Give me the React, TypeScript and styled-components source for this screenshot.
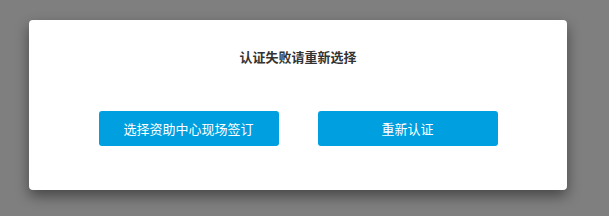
import React from "react";
import styled, { createGlobalStyle } from "styled-components";

const GlobalStyle = createGlobalStyle`
    html, body {
        margin: 0;
        padding: 0;
        background-color: #7f7f80;
        font-family: "Noto Sans CJK SC", "Noto Sans", sans-serif;
    }
`;

const Page = styled.div`
    width: 609px;
    height: 216px;
    padding: 20px 0 0 29px;
    box-sizing: border-box;
    background-color: #7f7f80;
`;

const Dialog = styled.div`
    width: 538px;
    height: 170px;
    box-sizing: border-box;
    padding-top: 27px;
    background-color: #fff;
    border-radius: 4px;
    box-shadow: 0 6px 14px rgba(0, 0, 0, 0.45);
    display: flex;
    flex-direction: column;
    align-items: center;
`;

const Title = styled.div`
    height: 20px;
    line-height: 20px;
    font-size: 13px;
    font-weight: 700;
    color: #333;
`;

const ButtonRow = styled.div`
    margin-top: 44px;
    display: flex;
    gap: 39px;
`;

const ActionButton = styled.button`
    width: 180px;
    height: 35px;
    border: none;
    border-radius: 3px;
    background-color: #00a0e0;
    color: #fff;
    font-family: inherit;
    font-size: 13px;
    cursor: pointer;
`;

export default function App() {
    return (
        <>
            <GlobalStyle />
            <Page>
                <Dialog>
                    <Title>认证失败请重新选择</Title>
                    <ButtonRow>
                        <ActionButton>选择资助中心现场签订</ActionButton>
                        <ActionButton>重新认证</ActionButton>
                    </ButtonRow>
                </Dialog>
            </Page>
        </>
    );
}
